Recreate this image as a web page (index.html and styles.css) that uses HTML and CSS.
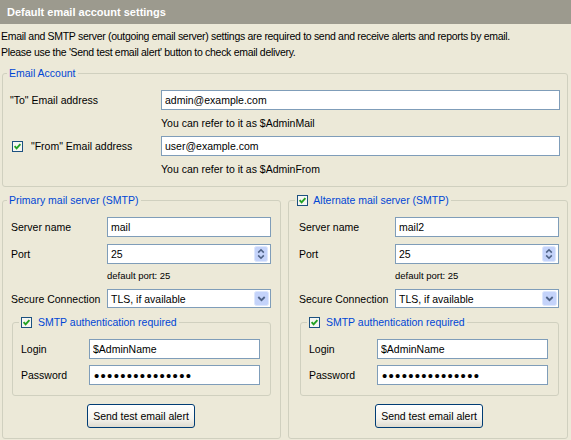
FILE: index.html
```html
<!DOCTYPE html>
<html>
<head>
<meta charset="utf-8">
<title>Default email account settings</title>
<link rel="stylesheet" href="styles.css">
</head>
<body>
<div class="title">Default email account settings</div>
<p class="intro">Email and SMTP server (outgoing email server) settings are required to send and receive alerts and reports by email.<br>Please use the 'Send test email alert' button to check email delivery.</p>

<fieldset class="group account">
  <legend>Email Account</legend>
  <div class="row">
    <label class="lbl lbl-wide">"To" Email address</label>
    <input class="field" type="text" value="admin@example.com">
  </div>
  <div class="hint hint-wide">You can refer to it as $AdminMail</div>
  <div class="row">
    <label class="lbl lbl-wide lbl-check">
      <svg class="check" width="11" height="11" viewBox="0 0 11 11"><rect x="0.5" y="0.5" width="10" height="10" fill="#f6f6f2" stroke="#1c5180"/><path d="M2.6 5.2 L4.6 7.4 L8.4 3.2" fill="none" stroke="#21a121" stroke-width="1.9"/></svg>
      "From" Email address
    </label>
    <input class="field" type="text" value="user@example.com">
  </div>
  <div class="hint hint-wide">You can refer to it as $AdminFrom</div>
</fieldset>

<div class="servers">
  <fieldset class="group server">
    <legend>Primary mail server (SMTP)</legend>
    <div class="row">
      <label class="lbl">Server name</label>
      <input class="field" type="text" value="mail">
    </div>
    <div class="row gap">
      <label class="lbl">Port</label>
      <div class="spin">
        <input class="spin-input" type="text" value="25">
        <svg class="spin-btn" width="14" height="16" viewBox="0 0 14 16"><rect x="0.5" y="0.5" width="13" height="15" rx="2" fill="#c4d3fa" stroke="#dde7fd"/><path d="M4.2 6.6 L7 3.8 L9.8 6.6" fill="none" stroke="#4d6185" stroke-width="1.6"/><path d="M4.2 9.4 L7 12.2 L9.8 9.4" fill="none" stroke="#4d6185" stroke-width="1.6"/></svg>
      </div>
    </div>
    <div class="hint small">default port: 25</div>
    <div class="row row-combo">
      <label class="lbl">Secure Connection</label>
      <div class="combo">
        <span class="combo-value">TLS, if available</span>
        <svg class="drop-btn" width="15" height="15" viewBox="0 0 15 15"><rect x="0.5" y="0.5" width="14" height="14" rx="2" fill="#c4d3fa" stroke="#dde7fd"/><path d="M4.3 6 L7.5 9.2 L10.7 6" fill="none" stroke="#4d6185" stroke-width="1.8"/></svg>
      </div>
    </div>
    <fieldset class="group auth">
      <legend class="legend-check">
        <svg class="check" width="11" height="11" viewBox="0 0 11 11"><rect x="0.5" y="0.5" width="10" height="10" fill="#f6f6f2" stroke="#1c5180"/><path d="M2.6 5.2 L4.6 7.4 L8.4 3.2" fill="none" stroke="#21a121" stroke-width="1.9"/></svg>
        SMTP authentication required
      </legend>
      <div class="row">
        <label class="lbl lbl-auth">Login</label>
        <input class="field" type="text" value="$AdminName">
      </div>
      <div class="row gap-s">
        <label class="lbl lbl-auth">Password</label>
        <input class="field secret" type="password" value="secretpassword1">
      </div>
    </fieldset>
    <div class="actions"><button class="btn" type="button">Send test email alert</button></div>
  </fieldset>

  <fieldset class="group server alt">
    <legend class="legend-check">
      <svg class="check" width="11" height="11" viewBox="0 0 11 11"><rect x="0.5" y="0.5" width="10" height="10" fill="#f6f6f2" stroke="#1c5180"/><path d="M2.6 5.2 L4.6 7.4 L8.4 3.2" fill="none" stroke="#21a121" stroke-width="1.9"/></svg>
      Alternate mail server (SMTP)
    </legend>
    <div class="row">
      <label class="lbl">Server name</label>
      <input class="field" type="text" value="mail2">
    </div>
    <div class="row gap">
      <label class="lbl">Port</label>
      <div class="spin">
        <input class="spin-input" type="text" value="25">
        <svg class="spin-btn" width="14" height="16" viewBox="0 0 14 16"><rect x="0.5" y="0.5" width="13" height="15" rx="2" fill="#c4d3fa" stroke="#dde7fd"/><path d="M4.2 6.6 L7 3.8 L9.8 6.6" fill="none" stroke="#4d6185" stroke-width="1.6"/><path d="M4.2 9.4 L7 12.2 L9.8 9.4" fill="none" stroke="#4d6185" stroke-width="1.6"/></svg>
      </div>
    </div>
    <div class="hint small">default port: 25</div>
    <div class="row row-combo">
      <label class="lbl">Secure Connection</label>
      <div class="combo">
        <span class="combo-value">TLS, if available</span>
        <svg class="drop-btn" width="15" height="15" viewBox="0 0 15 15"><rect x="0.5" y="0.5" width="14" height="14" rx="2" fill="#c4d3fa" stroke="#dde7fd"/><path d="M4.3 6 L7.5 9.2 L10.7 6" fill="none" stroke="#4d6185" stroke-width="1.8"/></svg>
      </div>
    </div>
    <fieldset class="group auth">
      <legend class="legend-check">
        <svg class="check" width="11" height="11" viewBox="0 0 11 11"><rect x="0.5" y="0.5" width="10" height="10" fill="#f6f6f2" stroke="#1c5180"/><path d="M2.6 5.2 L4.6 7.4 L8.4 3.2" fill="none" stroke="#21a121" stroke-width="1.9"/></svg>
        SMTP authentication required
      </legend>
      <div class="row">
        <label class="lbl lbl-auth">Login</label>
        <input class="field" type="text" value="$AdminName">
      </div>
      <div class="row gap-s">
        <label class="lbl lbl-auth">Password</label>
        <input class="field secret" type="password" value="secretpassword1">
      </div>
    </fieldset>
    <div class="actions"><button class="btn" type="button">Send test email alert</button></div>
  </fieldset>
</div>
</body>
</html>
```

FILE: styles.css
```css
* { box-sizing: border-box; }

html, body { margin: 0; }

body {
  width: 571px;
  height: 440px;
  overflow: hidden;
  background: #ece9d8;
  color: #000;
  font: 10.5px "Liberation Sans", Arial, sans-serif;
}

/* page heading strip */
.title {
  height: 24px;
  padding-left: 7px;
  display: flex;
  align-items: center;
  background: #9c9a8e;
  color: #fff;
  font-weight: bold;
  font-size: 11px;
}

.intro {
  margin: 4px 0 0;
  padding-left: 1px;
  line-height: 16px;
  letter-spacing: -0.3px;
}

/* XP style group boxes */
.group {
  margin: 0;
  min-width: 0;
  border: 1px solid #d0d0bf;
  border-radius: 3px;
}

.group legend {
  padding: 0 2px;
  height: 14px;
  line-height: 14px;
  color: #0046d5;
}

.check {
  display: inline-block;
  vertical-align: -2px;
  margin-right: 3px;
}

.account {
  margin: 6px 3px 0 2px;
  padding: 10px 7px 10px 7px;
}

.account legend { margin-left: -3px; }

.row {
  display: flex;
  align-items: center;
  height: 20px;
}

.row.gap { margin-top: 7px; }
.row.gap-s { margin-top: 6px; }
.row.row-combo { height: 19px; margin-top: 7px; }

.lbl {
  flex: none;
  width: 96px;
  white-space: nowrap;
}

.lbl-wide { width: 151px; }
.lbl-auth { width: 68px; }

.lbl-check { padding-left: 2px; }
.lbl-check .check { margin-right: 5px; }

.field {
  flex: 1;
  min-width: 0;
  height: 100%;
  margin: 0;
  padding: 0 3px;
  border: 1px solid #7f9db9;
  background: #fff;
  color: #000;
  font: inherit;
  outline: none;
}

.field.secret {
  padding-left: 4px;
  font-size: 15px;
  letter-spacing: 1.3px;
}

.hint {
  margin: 6px 0 6px 96px;
  line-height: 14px;
}

.hint-wide { margin-left: 151px; }
.account .hint:last-child { margin-bottom: 0; }

.hint.small {
  margin: 6px 0 0 96px;
  line-height: 12px;
  font-size: 9.5px;
}

/* the two mail server columns */
.servers {
  display: flex;
  gap: 7px;
  margin: 6px 3px 0 2px;
  height: 246px;
}

.server {
  flex: 1;
  padding: 10px 9px 10px 8px;
}

.server > legend { margin-left: -4px; }

.server.alt { padding: 10px 8px 10px 10px; }
.server.alt > legend { margin-left: -4px; }

/* numeric spin box */
.spin {
  flex: 1;
  height: 100%;
  display: flex;
  align-items: center;
  border: 1px solid #7f9db9;
  background: #fff;
  padding-right: 2px;
}

.spin-input {
  flex: 1;
  min-width: 0;
  height: 100%;
  border: 0;
  margin: 0;
  padding: 0 3px;
  font: inherit;
  background: transparent;
  outline: none;
}

.spin-btn { flex: none; }

/* drop-down list */
.combo {
  flex: 1;
  height: 100%;
  display: flex;
  align-items: center;
  justify-content: space-between;
  border: 1px solid #7f9db9;
  background: #fff;
  padding: 0 1px 0 3px;
}

.auth {
  margin: 7px 0 0 1px;
  padding: 10px 10px 10px 8px;
}

.auth > legend { margin-left: -2px; }

.actions {
  display: flex;
  justify-content: center;
  margin-top: 8px;
}

.btn {
  width: 108px;
  height: 24px;
  padding: 0;
  border: 1px solid #003c74;
  border-radius: 3px;
  background: linear-gradient(#ffffff, #f5f4ef 60%, #dedbd0);
  color: #000;
  font: inherit;
}
```
